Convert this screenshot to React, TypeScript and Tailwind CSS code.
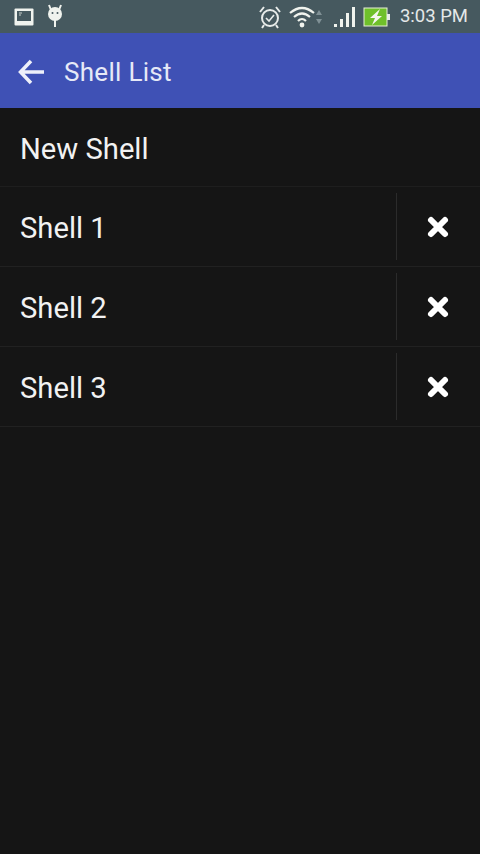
function XIcon() {
  return (
    <svg width="24" height="24" viewBox="0 0 24 24" fill="none" className="ml-[-1px]">
      <path d="M5 5 L19 19 M19 5 L5 19" stroke="#ffffff" strokeWidth="6" strokeLinecap="round" />
    </svg>
  );
}

function ShellRow({ name }: { name: string }) {
  return (
    <div className="flex h-[80px] items-stretch border-b border-[#212121] pt-[6px] pb-[6px]">
      <div className="flex flex-1 items-center pt-[4px] pl-[20px] text-[29.2px] leading-none text-[#f2f2f2]">{name}</div>
      <div className="flex w-[84px] items-center justify-center border-l border-[#2b2b2b] pr-[1px] pl-[1px]">
        <XIcon />
      </div>
    </div>
  );
}

export default function App() {
  return (
    <div className="flex h-[854px] w-[480px] flex-col overflow-hidden bg-[#151515] font-['Roboto',sans-serif]">
      <div className="flex h-[33px] items-center justify-between bg-[#46595f] pr-[11px] pl-[14px]">
        <div className="flex items-center gap-[13px]">
          <svg width="20" height="18" viewBox="0 0 20 18" fill="none">
            <rect x="0.5" y="0.5" width="19" height="17" rx="1" fill="#f0f3ee" />
            <rect x="3" y="3" width="14" height="10" fill="#46595f" />
            <path d="M5 5 L8 5 M5 7 L7 7" stroke="#c8d0cc" strokeWidth="1" />
          </svg>
          <svg width="16" height="26" viewBox="0 0 16 26" fill="none">
            <path d="M2 1 L4 6 M14 1 L12 6" stroke="#f0f3ee" strokeWidth="2" />
            <ellipse cx="8" cy="10" rx="7" ry="7" fill="#f0f3ee" />
            <circle cx="5.5" cy="9" r="1" fill="#46595f" />
            <circle cx="10.5" cy="9" r="1" fill="#46595f" />
            <rect x="7" y="16" width="2" height="7" fill="#f0f3ee" />
          </svg>
        </div>
        <div className="flex items-center">
          <svg width="24" height="24" viewBox="0 0 24 24" fill="none" className="mr-[7px]">
            <circle cx="12" cy="13" r="8" stroke="#e8ecea" strokeWidth="2" />
            <path d="M8 13 L11 16 L16 10" stroke="#e8ecea" strokeWidth="1.6" />
            <path d="M2 7 L6 2 M22 7 L18 2 M6 20 L4 23 M18 20 L20 23" stroke="#e8ecea" strokeWidth="2" />
          </svg>
          <svg width="26" height="22" viewBox="0 0 26 22" fill="none">
            <path d="M1 7 Q13 -3 25 7 M5 11 Q13 4 21 11 M9 15 Q13 11 17 15" stroke="#f0f3ee" strokeWidth="2.2" />
            <circle cx="13" cy="19" r="2.4" fill="#f0f3ee" />
          </svg>
          <svg width="8" height="16" viewBox="0 0 8 16" fill="#7f9095" className="mr-[10px]">
            <path d="M4 1 L7 6 L1 6 Z M1 10 L7 10 L4 15 Z" />
          </svg>
          <svg width="23" height="22" viewBox="0 0 23 22" fill="#f0f3ee" className="mr-[7px]">
            <rect x="1" y="18" width="3" height="3" />
            <rect x="7" y="13" width="3" height="8" />
            <rect x="13" y="7" width="3" height="14" />
            <rect x="19" y="1" width="3" height="20" />
          </svg>
          <svg width="27" height="20" viewBox="0 0 27 20" fill="none" className="mr-[10px]">
            <rect x="1" y="1" width="23" height="18" fill="#6fc02a" stroke="#e8f0d8" strokeWidth="1" />
            <rect x="24" y="7" width="3" height="6" fill="#e8ecea" />
            <path d="M17 2 L7 11 L12 11 L9 18 L19 9 L14 9 Z" fill="#f4f6ee" />
          </svg>
          <span className="mr-[1px] text-[18.5px] leading-none text-[#e4e8e8]">3:03 PM</span>
        </div>
      </div>

      <div className="flex h-[75px] items-center bg-[#3f51b5] pl-[18px]">
        <svg width="28" height="26" viewBox="0 0 28 26" fill="none" className="mt-[2px] mr-[18px]">
          <path d="M26 13 L3 13 M13 2 L2.5 13 L13 24" stroke="#eef0fa" strokeWidth="3.5" />
        </svg>
        <span className="pt-[2px] text-[26px] leading-none tracking-[0.3px] text-[#e6e9f7]">Shell List</span>
      </div>

      <div className="flex h-[79px] items-center border-b border-[#1e1e1e] pt-[6px] pl-[20px] text-[29.2px] leading-none text-[#f2f2f2]">
        New Shell
      </div>
      <ShellRow name="Shell 1" />
      <ShellRow name="Shell 2" />
      <ShellRow name="Shell 3" />
    </div>
  );
}
